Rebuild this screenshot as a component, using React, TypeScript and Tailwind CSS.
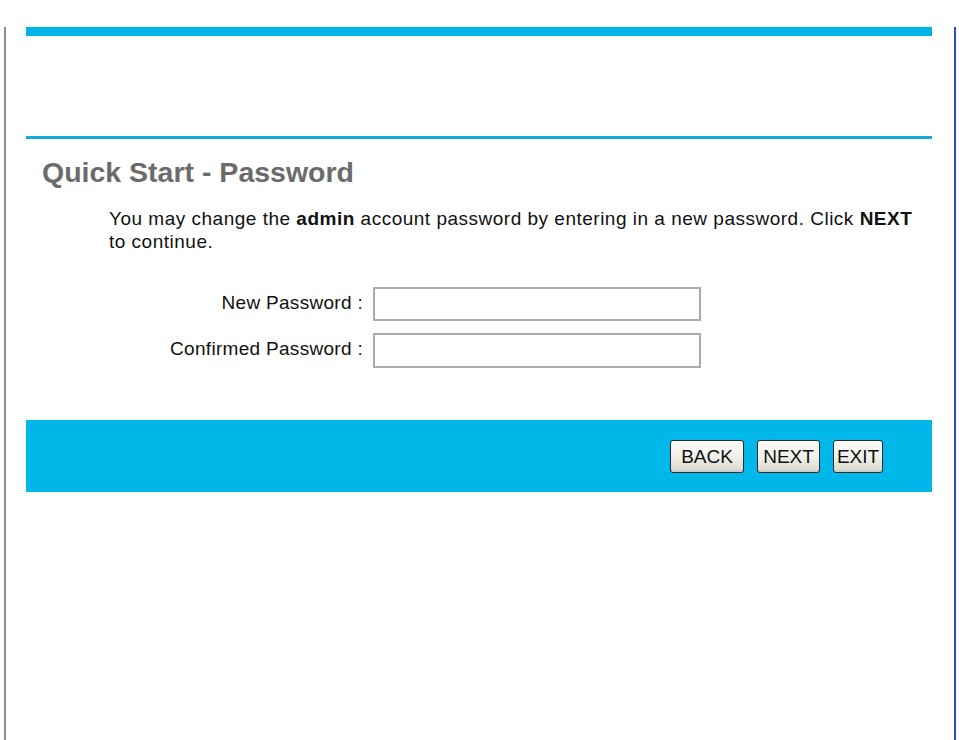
import React from 'react';

function XpButton({ label, width }: { label: string; width: string }) {
  return (
    <button
      type="button"
      className={`${width} h-[33px] rounded-[3px] border border-[#2b2b2b] bg-gradient-to-b from-[#fdfdfb] via-[#f1f0ea] to-[#d9d7cd] text-[19px] leading-none text-[#111] shadow-[inset_0_-2px_0_#cfcdc4]`}
    >
      {label}
    </button>
  );
}

export default function App() {
  return (
    <div className="w-[959px] h-[740px] bg-white pt-[9px] overflow-hidden" style={{ fontFamily: '"Liberation Sans", Arial, sans-serif' }}>
      <div className="ml-[4px] w-[952px] h-[728px] border-l-2 border-l-[#8c8c86] border-r-2 border-r-[#2e4fc2] border-b border-b-[#ececec] pl-[20px] pr-[22px]">
        <div className="mt-[18px] h-[9px] bg-[#00b4e6]" />
        <div className="mt-[100px] h-[3px] bg-[#17a9d9]" />

        <h1 className="mt-[19px] ml-[16px] text-[28.5px] leading-[28px] font-bold text-[#6b6b6b]">
          Quick Start - Password
        </h1>

        <p className="mt-[21px] ml-[83px] w-[816px] text-[19px] leading-[23px] tracking-[0.5px] text-[#111]">
          You may change the <b>admin</b> account password by entering in a new password. Click <b>NEXT</b> to continue.
        </p>

        <div className="mt-[34px] grid grid-cols-[337px_328px] gap-x-[10px] gap-y-[12px] items-center text-[19px] tracking-[0.3px] text-[#111]">
          <label className="text-right -mt-[2px]">New Password :</label>
          <input type="password" className="h-[34px] border-2 border-[#a9abad] bg-white outline-none" />
          <label className="text-right -mt-[2px]">Confirmed Password :</label>
          <input type="password" className="h-[35px] border-2 border-[#a9abad] bg-white outline-none" />
        </div>

        <div className="mt-[52px] h-[72px] bg-[#00b7ea] flex items-center justify-end gap-[13px] pr-[49px]">
          <XpButton label="BACK" width="w-[74px]" />
          <XpButton label="NEXT" width="w-[63px]" />
          <XpButton label="EXIT" width="w-[50px]" />
        </div>
      </div>
    </div>
  );
}
